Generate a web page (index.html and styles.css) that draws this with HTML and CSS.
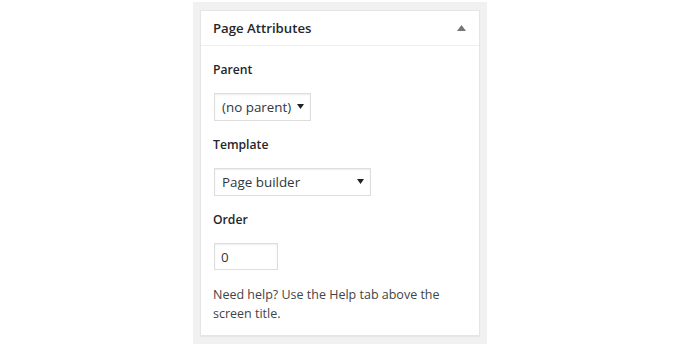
FILE: index.html
```html
<!DOCTYPE html>
<html>
<head>
    <title>Page Attributes</title>
    <link rel="stylesheet" href="styles.css">
</head>
<body>
    <div class="sidebar">
        <div class="postbox">
            <div class="hndle">
                <h2>Page Attributes</h2>
                <svg class="toggle" width="9" height="6" viewBox="0 0 9 6"><path d="M0 6L4.5 0 9 6z" fill="#72777c"/></svg>
            </div>
            <div class="inside">
                <p class="label first">Parent</p>
                <div class="select-wrap parent">
                    <select name="parent_id">
                        <option value="">(no parent)</option>
                    </select>
                    <svg class="caret" width="7" height="5" viewBox="0 0 7 5"><path d="M0 0h7L3.5 5z" fill="#222"/></svg>
                </div>
                <p class="label">Template</p>
                <div class="select-wrap template">
                    <select name="page_template">
                        <option value="builder">Page builder</option>
                    </select>
                    <svg class="caret" width="7" height="5" viewBox="0 0 7 5"><path d="M0 0h7L3.5 5z" fill="#222"/></svg>
                </div>
                <p class="label">Order</p>
                <input class="order" type="text" name="menu_order" value="0">
                <p class="help">Need help? Use the Help tab above the screen title.</p>
            </div>
        </div>
    </div>
</body>
</html>
```

FILE: styles.css
```css
body { margin: 0; background: #fff; font-family: "Open Sans", "Noto Sans", sans-serif; color: #23282d; }
.sidebar {
    margin: 2px 0 0 193px; width: 294px; height: 342px;
    padding: 8px 7px; box-sizing: border-box; background: #f1f1f1;
}
.postbox {
    background: #fff; border: 1px solid #e5e5e5;
    box-shadow: 0 1px 1px rgba(0,0,0,.04);
}
.hndle {
    display: flex; align-items: center; justify-content: space-between;
    height: 34px; padding: 0 12px; border-bottom: 1px solid #eee;
}
.hndle h2 { margin: 0; font-size: 13.2px; font-weight: 600; line-height: 34px; }
.toggle { margin-right: 1px; }
.inside { padding: 0 12px 12px; font-size: 12.5px; }
.label { margin: 15px 0 14px; font-weight: 600; line-height: 18px; font-size: 12.2px; }
.label.first { margin-top: 15px; }
.select-wrap { position: relative; margin-left: 1px; height: 28px; }
.select-wrap.parent { width: 97px; }
.select-wrap.template { width: 157px; }
select, .order {
    display: block; box-sizing: border-box; margin: 0; padding: 0 7px;
    border: 1px solid #ddd; border-radius: 0; background: #fff;
    box-shadow: inset 0 1px 2px rgba(0,0,0,.07);
    font-family: inherit; font-size: 13.4px; color: #32373c;
}
select { -webkit-appearance: none; appearance: none; width: 100%; height: 28px; }
.caret { position: absolute; right: 7px; top: 11px; pointer-events: none; }
.order { width: 64px; height: 27px; margin-left: 1px; padding: 0 6px; outline: none; }
.help { margin: 15px 0 0; line-height: 19px; color: #444; }
```
